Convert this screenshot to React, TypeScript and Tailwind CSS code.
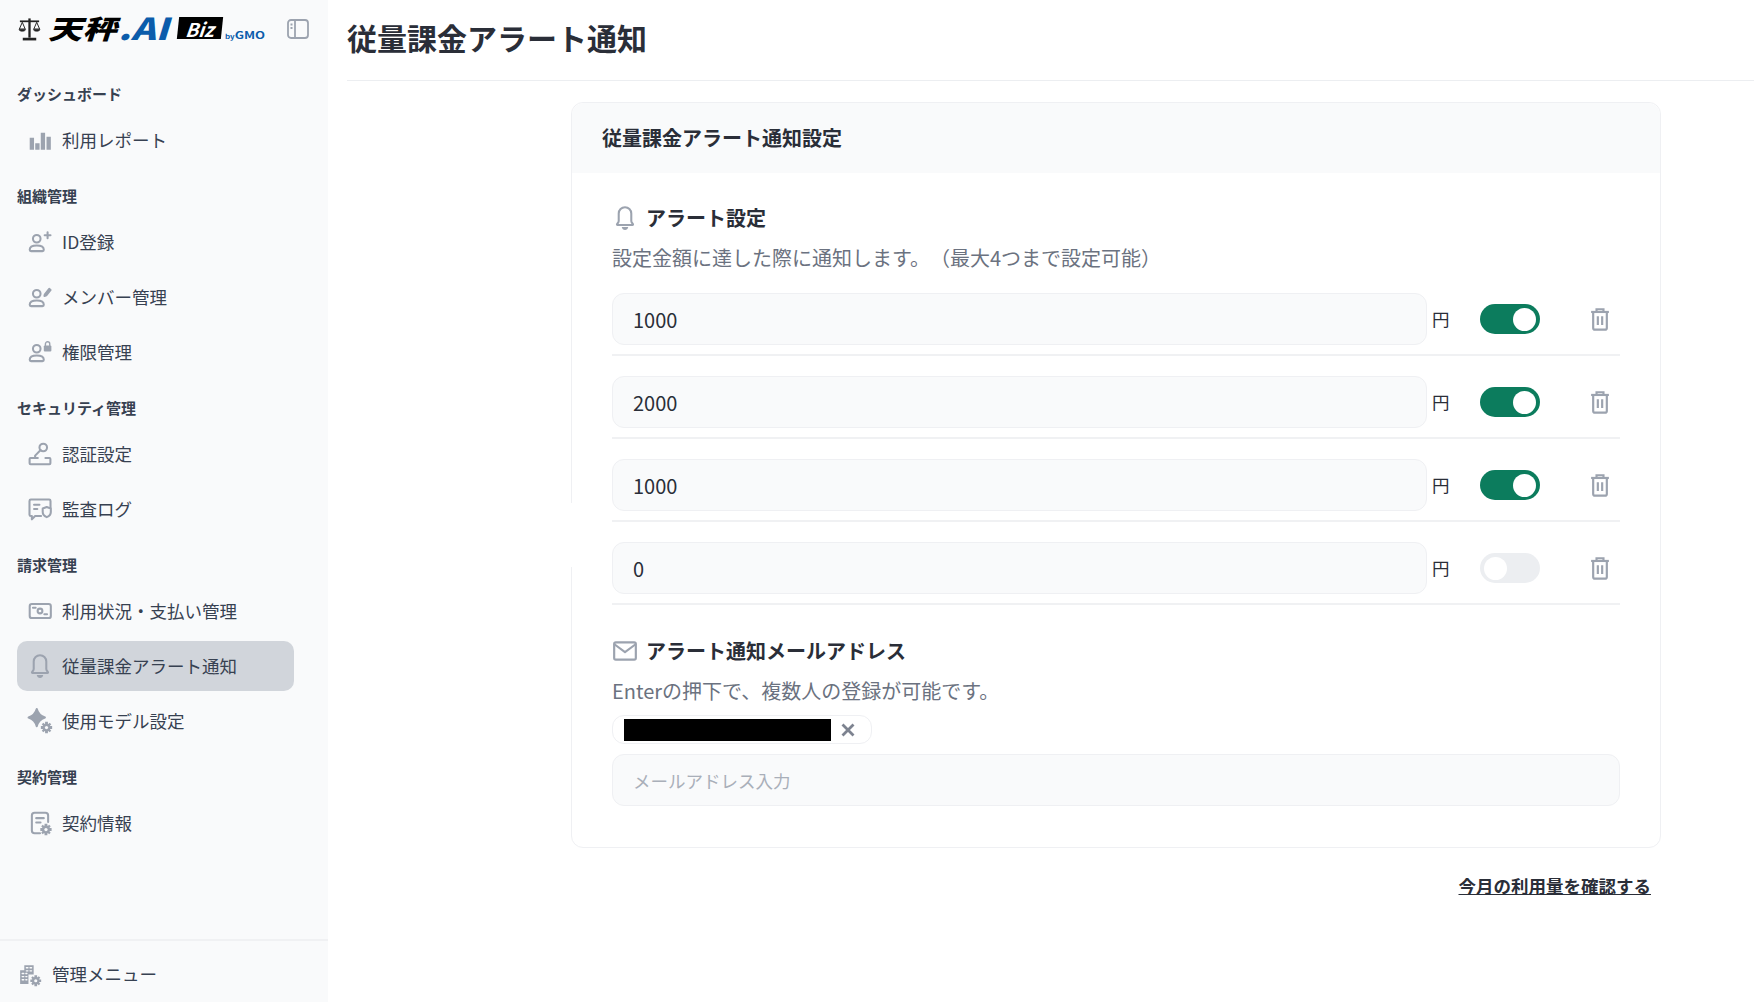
import { useState, type ReactNode } from 'react';

const FONT = '"Noto Sans CJK JP", "Noto Sans", sans-serif';

function Icon({ children, className = 'h-[26px] w-[26px]' }: { children: ReactNode; className?: string }) {
  return (
    <svg viewBox="0 0 24 24" className={`${className} shrink-0 text-[#9ca3af]`} fill="none" stroke="currentColor" strokeWidth={1.9} strokeLinecap="round" strokeLinejoin="round">
      {children}
    </svg>
  );
}

const Person = () => (
  <>
    <circle cx="9" cy="9" r="3.5" />
    <path d="M2.500 19.200c0-2.600 2.600-3.900 6.500-3.900s6.500 1.300 6.500 3.900c0 .8-.5 1.200-1.200 1.200H3.700c-.7 0-1.200-.4-1.200-1.200Z" />
  </>
);

const Gear = ({ x, y }: { x: number; y: number }) => (
  <g fill="currentColor" stroke="none">
    <circle cx={x} cy={y} r="3.600" />
    <path d={`M${x - 1.3} ${y - 5.200}h2.600v2.500h-2.600zM${x - 1.3} ${y + 2.700}h2.600v2.500h-2.600zM${x - 5.200} ${y - 1.300}h2.500v2.600h-2.500zM${x + 2.700} ${y - 1.300}h2.500v2.600h-2.500z`} />
    <path d={`M${x - 4.400} ${y - 2.900}l1.500-1.500 2 2-1.500 1.500zM${x + 4.400} ${y - 2.900}l-1.500-1.500-2 2 1.500 1.500zM${x - 4.400} ${y + 2.900}l1.500 1.500 2-2-1.500-1.500zM${x + 4.400} ${y + 2.900}l-1.500 1.500-2-2 1.500-1.500z`} />
    <circle cx={x} cy={y} r="1.500" fill="#f9fafb" />
  </g>
);

const BellPaths = () => (
  <>
    <path d="M12 2a5.800 5.800 0 0 0-5.800 5.800v7c0 1.300-.9 2-1.500 2.800-.3.400-.1.900.4.900h13.800c.5 0 .7-.5.4-.9-.6-.8-1.500-1.500-1.500-2.800v-7A5.800 5.800 0 0 0 12 2Z" />
    <path d="M9 20.400h6c-.3 1.800-1.500 2.600-3 2.600s-2.700-.8-3-2.600Z" fill="currentColor" stroke="none" />
  </>
);

const TrashIcon = () => (
  <Icon>
    <g strokeWidth={2} strokeLinecap="butt" strokeLinejoin="miter">
      <path d="M3.800 5.500h16.400" />
      <path d="M8.800 5.500V3h6.400v2.500" />
      <path d="M5.700 5.500v14.700c0 1 .6 1.600 1.600 1.600h9.400c1 0 1.600-.6 1.600-1.600V5.500" />
      <path d="M10 9.500v8M14 9.500v8" />
    </g>
  </Icon>
);

type Item = { label: string; icon: ReactNode; active?: boolean };
type Section = { title: string; items: Item[] };

const sections: Section[] = [
  {
    title: 'ダッシュボード',
    items: [
      {
        label: '利用レポート',
        icon: (
          <Icon>
            <path d="M2.500 10h4v11h-4zM7.600 15h4v6h-4zM12.700 5.300h4V21h-4zM18 9h4v12h-4z" fill="currentColor" stroke="none" />
          </Icon>
        ),
      },
    ],
  },
  {
    title: '組織管理',
    items: [
      { label: 'ID登録', icon: <Icon><Person /><path d="M19 3v5.500M16.300 5.800h5.400" /></Icon> },
      { label: 'メンバー管理', icon: <Icon><Person /><path d="M16.500 9.500l4-5 1.300 1-4 5-1.700.6.400-1.600Z" /></Icon> },
      {
        label: '権限管理',
        icon: (
          <Icon>
            <Person />
            <rect x="15.500" y="6" width="7" height="5.500" rx="1" fill="currentColor" stroke="none" />
            <path d="M17 6V4.600a2 2 0 0 1 4 0V6" strokeWidth={1.300} />
          </Icon>
        ),
      },
    ],
  },
  {
    title: 'セキュリティ管理',
    items: [
      {
        label: '認証設定',
        icon: (
          <Icon>
            <circle cx="15" cy="6" r="3.500" />
            <path d="M12.600 8.400 7.500 13.500v2.200" />
            <path d="M10 15.700H3.300c-.6 0-.9.400-.9.900v4c0 .5.300.9.900.9h17.400c.6 0 .9-.4.900-.9v-4c0-.5-.3-.9-.9-.9H17" />
          </Icon>
        ),
      },
      {
        label: '監査ログ',
        icon: (
          <Icon>
            <path d="M13 18.500H7.500L4.500 21.500v-3H3.600c-.8 0-1.300-.5-1.300-1.300V4.600c0-.8.500-1.300 1.300-1.300h16.800c.8 0 1.300.5 1.300 1.300v6" />
            <path d="M6.500 8h5M6.500 12h3" />
            <path d="M14.500 11.500l3.700-1.400 3.800 1.400v3.300c0 2.400-1.700 3.900-3.800 4.700-2-.8-3.700-2.300-3.700-4.700Z" />
          </Icon>
        ),
      },
    ],
  },
  {
    title: '請求管理',
    items: [
      {
        label: '利用状況・支払い管理',
        icon: (
          <Icon>
            <rect x="2.500" y="5.500" width="19.500" height="13" rx="2" />
            <circle cx="12" cy="12" r="2.200" />
            <path d="M5.500 9h2.500M16 15h2.500" />
          </Icon>
        ),
      },
      { label: '従量課金アラート通知', active: true, icon: <Icon><BellPaths /></Icon> },
      {
        label: '使用モデル設定',
        icon: (
          <Icon>
            <path d="M9 1c1 3.800 3.400 6.400 7.500 7.800C12.400 10.200 10 12.800 9 16.800 8 12.800 5.600 10.200 1.500 8.800 5.600 7.400 8 4.800 9 1Z" fill="currentColor" />
            <Gear x={18} y={18} />
          </Icon>
        ),
      },
    ],
  },
  {
    title: '契約管理',
    items: [
      {
        label: '契約情報',
        icon: (
          <Icon>
            <path d="M19.500 11V5c0-1.500-.8-2.500-2.500-2.500H7C5.300 2.500 4.500 3.500 4.500 5v14c0 1.500.8 2.500 2.500 2.500h5" />
            <path d="M8.500 7.500h7M8.500 11.500h4" />
            <Gear x={17.500} y={18} />
          </Icon>
        ),
      },
    ],
  },
];

function Logo() {
  return (
    <div className="flex items-center">
      <svg viewBox="0 0 26 24" className="mb-[-3px] h-[24px] w-[25px] shrink-0 text-[#222]" fill="none" stroke="currentColor" strokeWidth={1.400}>
        <path d="M13 1v20" strokeWidth={2.400} />
        <path d="M3 4h20" strokeWidth={1.800} />
        <path d="M6 22.500h14" strokeWidth={2.800} />
        <path d="M5.500 5 2.500 12h6ZM20.500 5l-3 7h6Z" strokeWidth={1} />
        <path d="M2 12.500c.5 2.500 6.500 2.500 7 0ZM17 12.500c.5 2.500 6.500 2.500 7 0Z" fill="currentColor" strokeWidth={.6} />
      </svg>
      <span className="ml-[6px] w-[70px] scale-y-[0.78] text-[34px] font-black italic leading-none tracking-[0.5px] text-black">天秤</span>
      <span className="w-[60px] scale-y-[0.82] text-[37px] font-black italic leading-none text-[#0b5cab]">.AI</span>
      <span className="flex h-[22px] w-[44px] -skew-x-6 items-center justify-center bg-black text-[19px] font-bold italic leading-none text-white">Biz</span>
      <span className="ml-[3px] mt-[13px] scale-y-[0.75] text-[13px] font-bold leading-none text-[#0b5cab]">
        <span className="text-[8px]">by</span>GMO
      </span>
    </div>
  );
}

function Sidebar() {
  return (
    <aside className="flex h-[1002px] w-[328px] shrink-0 flex-col bg-[#f9fafb]">
      <div className="flex h-[83px] items-start justify-between pl-[17px] pr-[19px] pt-[9px]">
        <Logo />
        <svg viewBox="0 0 22 20" className="mt-[10px] h-[20px] w-[22px] text-[#9ca3af]" fill="none" stroke="currentColor" strokeWidth={1.800}>
          <rect x="1" y="1" width="20" height="18" rx="3" />
          <path d="M8 1v18" />
          <path d="M3.500 5.500h2M3.500 9h2" />
        </svg>
      </div>
      <nav className="flex flex-1 flex-col gap-[20px] pl-[17px] pr-[34px]">
        {sections.map((s) => (
          <div key={s.title}>
            <h3 className="mb-[10px] text-[15px] font-bold leading-[22px] text-[#374151]">{s.title}</h3>
            <ul className="flex flex-col gap-[5px]">
              {s.items.map((item) => (
                <li
                  key={item.label}
                  className={`flex h-[50px] items-center gap-[9px] rounded-[10px] pl-[10px] text-[17.5px] text-[#374151] ${item.active ? 'bg-[#d1d5db]' : ''}`}
                >
                  {item.icon}
                  <span>{item.label}</span>
                </li>
              ))}
            </ul>
          </div>
        ))}
      </nav>
      <div className="flex h-[63px] items-center gap-[10px] border-t-2 border-[#f0f1f3] pl-[17px] pt-[6px] text-[17.5px] text-[#374151]">
        <Icon className="h-[25px] w-[25px]">
          <path d="M3 21V8h4V3h9v9H11v9Z" fill="currentColor" stroke="none" />
          <path d="M9 5.500h1.500M12.500 5.500H14M9 8.500h1.500M12.500 8.500H14M5 11h1.500M5 14h1.500M5 17h1.500M8.500 11h1M8.500 14h1M8.500 17h1" stroke="#f9fafb" strokeWidth={1.300} />
          <Gear x={18} y={18} />
        </Icon>
        <span>管理メニュー</span>
      </div>
    </aside>
  );
}

function Toggle({ on, onChange }: { on: boolean; onChange: () => void }) {
  return (
    <button
      type="button"
      onClick={onChange}
      className={`flex h-[30px] w-[60px] shrink-0 items-center rounded-full px-[4px] ${on ? 'justify-end bg-[#0c7c5d]' : 'justify-start bg-[#eceef1]'}`}
    >
      <span className="h-[23px] w-[23px] rounded-full bg-white" />
    </button>
  );
}

function AlertRow({ value, initialOn }: { value: string; initialOn: boolean }) {
  const [on, setOn] = useState(initialOn);
  return (
    <div className="flex h-[63px] items-start border-b-2 border-[#f0f1f3]">
      <input
        defaultValue={value}
        className="h-[52px] w-[815px] rounded-[12px] border border-[#eff0f3] bg-[#f9fafb] px-[20px] text-[20px] text-[#2a2e38] outline-none"
      />
      <span className="ml-[5px] flex h-[52px] w-[17.500px] items-center text-[17.5px] text-[#2a2e38]">円</span>
      <div className="ml-[30px] flex h-[52px] items-center">
        <Toggle on={on} onChange={() => setOn(!on)} />
      </div>
      <div className="ml-[47px] flex h-[52px] items-center">
        <TrashIcon />
      </div>
    </div>
  );
}

export default function App() {
  return (
    <div className="flex min-h-[1002px] bg-white [text-spacing-trim:space-all]" style={{ fontFamily: FONT }}>
      <Sidebar />
      <main className="min-w-0 flex-1 pl-[19px]">
        <header className="flex h-[81px] items-center border-b border-[#eceef1] pb-[7px]">
          <h1 className="text-[30px] font-bold leading-none text-[#2a2e38]">従量課金アラート通知</h1>
        </header>
        <div className="ml-[224px] mt-[21px] w-[1090px]">
          <section className="relative h-[746px] rounded-[12px] border border-[#eff0f3] bg-white">
            <span className="absolute -left-px top-[400px] h-[64px] w-px bg-white" />
            <div className="flex h-[70px] items-center rounded-t-[12px] bg-[#f9fafb] px-[30px]">
              <h2 className="text-[20px] font-bold text-[#2a2e38]">従量課金アラート通知設定</h2>
            </div>
            <div className="px-[40px] pt-[27px]">
              <div className="flex h-[36px] items-center gap-[8px]">
                <Icon><BellPaths /></Icon>
                <h3 className="text-[20px] font-bold text-[#2a2e38]">アラート設定</h3>
              </div>
              <p className="mt-[8px] h-[28px] text-[20px] leading-[28px] text-[#6b7280]">設定金額に達した際に通知します。（最大4つまで設定可能）</p>
              <div className="mt-[21px] flex flex-col gap-[20px]">
                <AlertRow value="1000" initialOn />
                <AlertRow value="2000" initialOn />
                <AlertRow value="1000" initialOn />
                <AlertRow value="0" initialOn={false} />
              </div>
              <div className="mt-[28px] flex h-[36px] items-center gap-[8px]">
                <Icon>
                  <rect x="2" y="4" width="20" height="16" rx="1.500" strokeWidth={2} />
                  <path d="M2.500 6 12 13l9.500-7" strokeWidth={2} />
                </Icon>
                <h3 className="text-[20px] font-bold text-[#2a2e38]">アラート通知メールアドレス</h3>
              </div>
              <p className="mt-[8px] h-[28px] text-[20px] leading-[28px] text-[#6b7280]">Enterの押下で、複数人の登録が可能です。</p>
              <div className="mt-[10px] flex h-[29px] w-[260px] items-center rounded-[12px] border border-[#eff0f3] pl-[11px]">
                <span className="h-[22px] w-[207px] bg-black" />
                <svg viewBox="0 0 14 14" className="ml-[10px] h-[14px] w-[14px] text-[#7d8390]" fill="none" stroke="currentColor" strokeWidth={2.800}>
                  <path d="M1.500 1.500l11 11M12.500 1.500l-11 11" />
                </svg>
              </div>
              <input
                placeholder="メールアドレス入力"
                className="mt-[10px] h-[52px] w-full rounded-[12px] border border-[#eff0f3] bg-[#f9fafb] px-[20px] text-[17.5px] text-[#2a2e38] outline-none placeholder:text-[#a9afb9]"
              />
            </div>
          </section>
          <div className="mt-[24px] flex justify-end pr-[10px]">
            <a href="#" className="text-[17.5px] font-bold leading-[28px] text-[#2a2e38] underline">今月の利用量を確認する</a>
          </div>
        </div>
      </main>
    </div>
  );
}
